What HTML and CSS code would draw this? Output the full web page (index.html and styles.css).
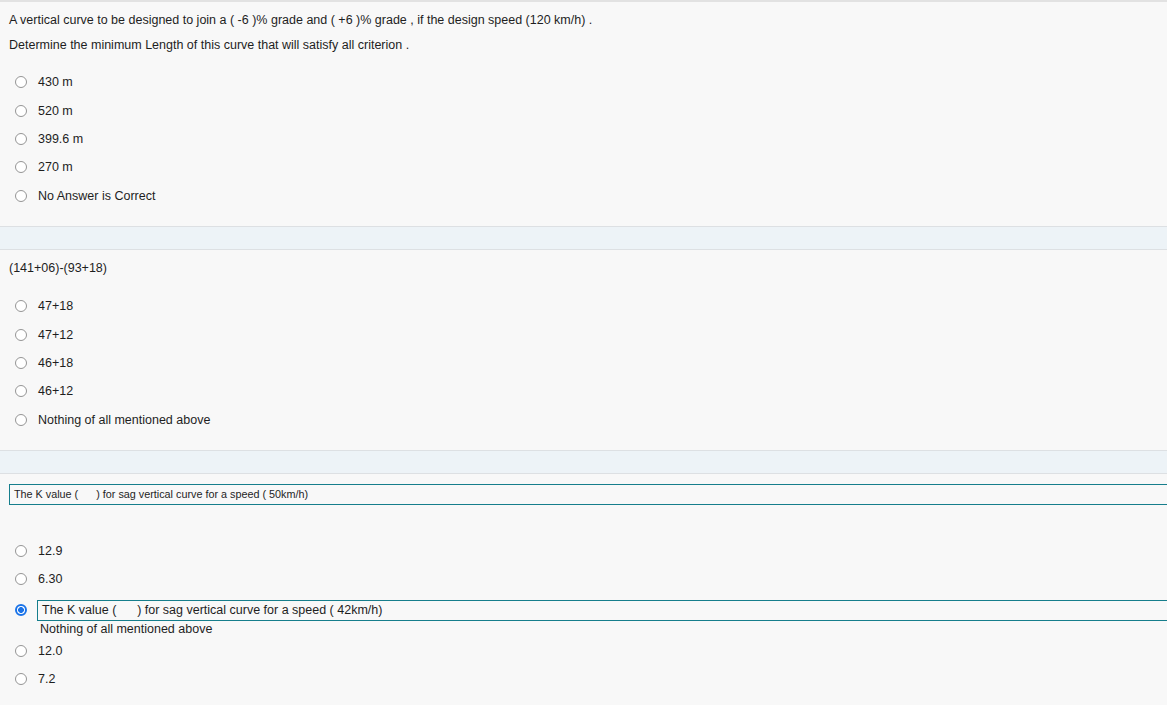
FILE: index.html
```html
<!DOCTYPE html>
<html>
<head>
<meta charset="utf-8">
<link rel="stylesheet" href="styles.css">
</head>
<body>
<div class="page">
  <section class="question q1">
    <p class="qtext">A vertical curve to be designed to join a ( -6 )% grade and ( +6 )% grade , if the design speed (120 km/h) .</p>
    <p class="qtext">Determine the minimum Length of this curve that will satisfy all criterion .</p>
    <ul class="options">
      <li class="option"><span class="radio"></span><span class="label">430 m</span></li>
      <li class="option"><span class="radio"></span><span class="label">520 m</span></li>
      <li class="option"><span class="radio"></span><span class="label">399.6 m</span></li>
      <li class="option"><span class="radio"></span><span class="label">270 m</span></li>
      <li class="option"><span class="radio"></span><span class="label">No Answer is Correct</span></li>
    </ul>
  </section>
  <div class="band"></div>
  <section class="question q2">
    <p class="qtext">(141+06)-(93+18)</p>
    <ul class="options">
      <li class="option"><span class="radio"></span><span class="label">47+18</span></li>
      <li class="option"><span class="radio"></span><span class="label">47+12</span></li>
      <li class="option"><span class="radio"></span><span class="label">46+18</span></li>
      <li class="option"><span class="radio"></span><span class="label">46+12</span></li>
      <li class="option"><span class="radio"></span><span class="label">Nothing of all mentioned above</span></li>
    </ul>
  </section>
  <div class="band"></div>
  <section class="question q3">
    <div class="qbox">The K value (&nbsp;&nbsp;&nbsp;&nbsp;&nbsp;&nbsp;) for sag vertical curve for a speed ( 50km/h)</div>
    <ul class="options">
      <li class="option"><span class="radio"></span><span class="label">12.9</span></li>
      <li class="option"><span class="radio"></span><span class="label">6.30</span></li>
      <li class="option selected"><span class="radio checked"></span>
        <div class="label-block">
          <div class="abox">The K value (&nbsp;&nbsp;&nbsp;&nbsp;&nbsp;&nbsp;) for sag vertical curve for a speed ( 42km/h)</div>
          <div class="sub">Nothing of all mentioned above</div>
        </div>
      </li>
      <li class="option"><span class="radio"></span><span class="label">12.0</span></li>
      <li class="option"><span class="radio"></span><span class="label">7.2</span></li>
    </ul>
  </section>
</div>
</body>
</html>
```

FILE: styles.css
```css
html, body {
  margin: 0;
  padding: 0;
  background: #f8f8f8;
  overflow: hidden;
}
body {
  font-family: "Liberation Sans", Arial, sans-serif;
  font-size: 12.5px;
  color: #1e1e1e;
  width: 1167px;
  height: 705px;
}
.page {
  border-top: 2px solid #e2e2e2;
}
.question {
  padding: 6px 0 16px 9px;
}
.q2 {
  padding-top: 6px;
}
.q3 {
  padding-top: 10px;
}
.qtext {
  margin: 0;
  line-height: 25px;
}
.band {
  height: 22px;
  background: #edf3f7;
  border-top: 1px solid #dde0e3;
  border-bottom: 1px solid #dde0e3;
}
.options {
  list-style: none;
  margin: 10px 0 0;
  padding: 0;
}
.q2 .options { margin-top: 11px; }
.q3 .options { margin-top: 32px; }
.option {
  display: flex;
  align-items: center;
  height: 28.4px;
}
.radio {
  box-sizing: border-box;
  width: 12px;
  height: 12px;
  border: 1px solid #959595;
  border-radius: 50%;
  background: #fff;
  margin-left: 6px;
  margin-right: 11px;
  flex: none;
}
.radio.checked {
  border: 2px solid #1a73e8;
  background: radial-gradient(circle, #1a73e8 0 2.6px, #fff 3.2px);
}
.qbox {
  box-sizing: border-box;
  height: 21px;
  border: 1px solid #167e8c;
  border-right: none;
  font-size: 10.8px;
  line-height: 19px;
  padding-left: 4px;
}
.option.selected {
  height: auto;
  align-items: flex-start;
  padding-top: 6px;
}
.option.selected .radio {
  margin-top: 4px;
  margin-right: 10px;
}
.label-block {
  flex: 1;
}
.abox {
  box-sizing: border-box;
  height: 21px;
  border: 1px solid #167e8c;
  border-right: none;
  line-height: 19px;
  padding-left: 4px;
}
.sub {
  line-height: 16px;
  padding-left: 3px;
}
```
